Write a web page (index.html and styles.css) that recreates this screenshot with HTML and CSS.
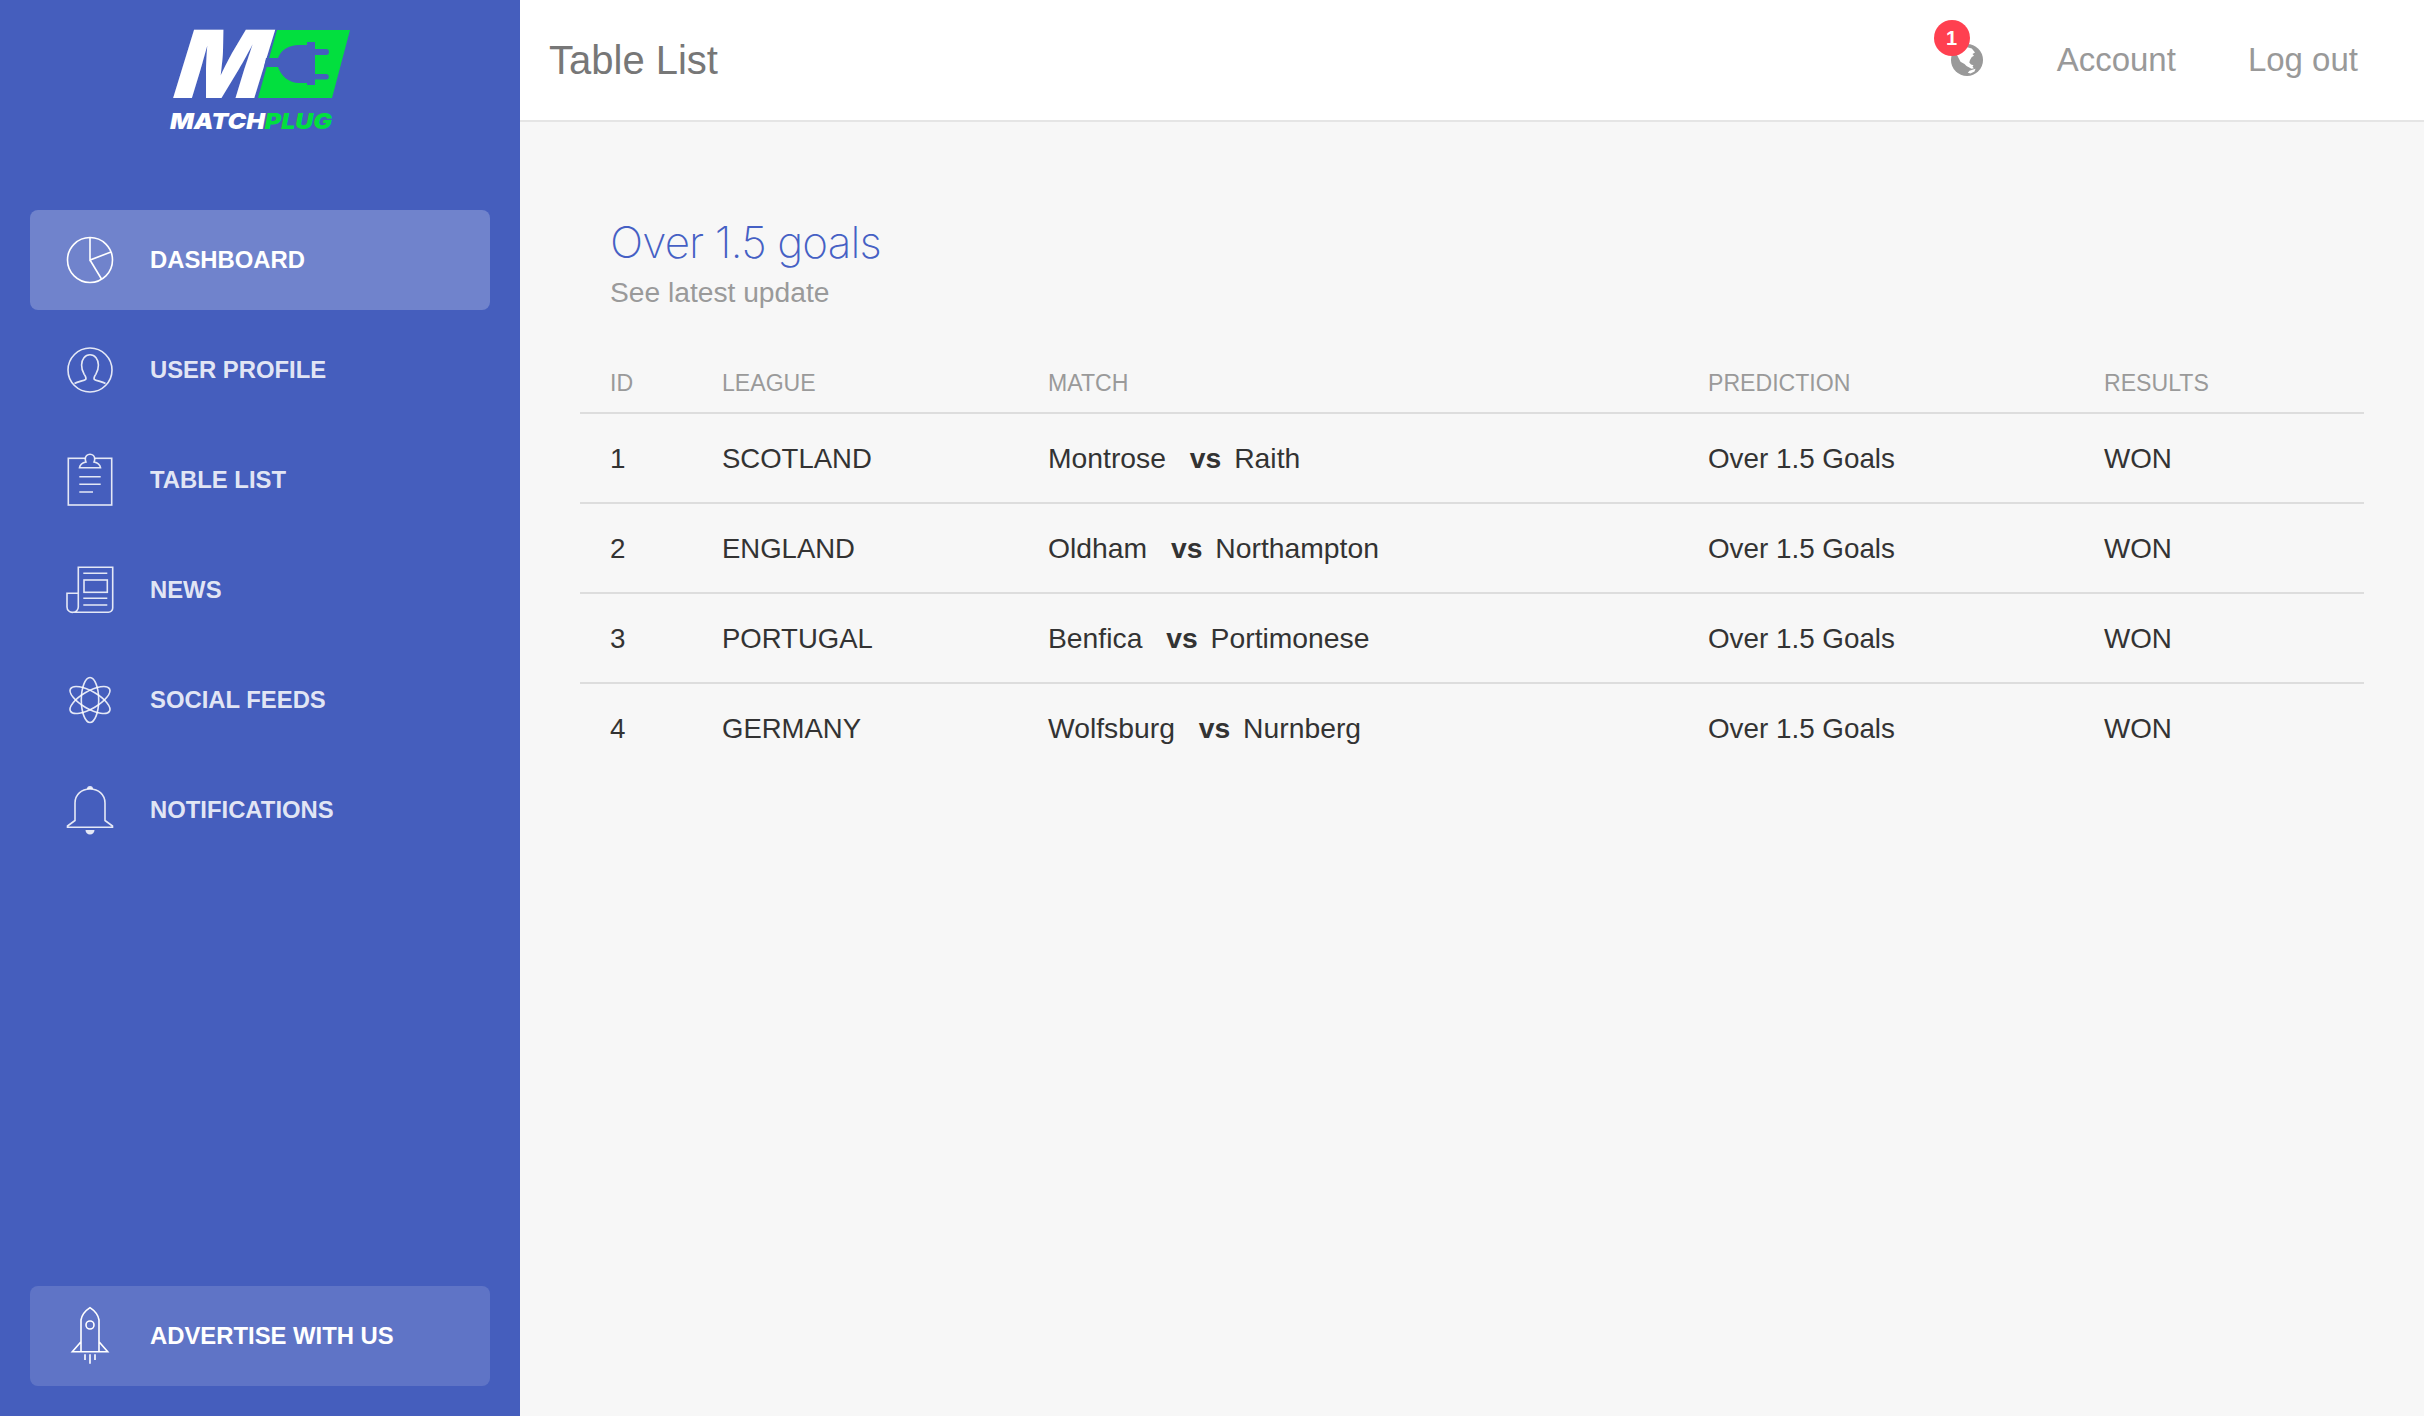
FILE: index.html
```html
<!DOCTYPE html>
<html lang="en">
<head>
<meta charset="utf-8">
<title>Table List</title>
<link rel="stylesheet" href="styles.css">
</head>
<body>
<div class="app">
  <aside class="sidebar">
    <div class="brand">
      <svg class="logo" width="200" height="140" viewBox="160 0 200 140">
        <text class="logo-m" transform="translate(173 98) skewX(-8)" textLength="90" lengthAdjust="spacingAndGlyphs">M</text>
        <path class="logo-green" d="M277 30H350L332 98H258Z"/>
        <path class="logo-cut" d="M307 42h8v7h11a3 3 0 0 1 0 6h-11v19h11a2.600 2.600 0 0 1 0 5.500h-11V85h-8v-2h-8c-10 0-18-7-21-16h-14l2-9h12c3-8 11-13 21-13h8Z"/>
        <text class="logo-word" x="170" y="129" textLength="162" lengthAdjust="spacingAndGlyphs"><tspan class="logo-match">MATCH</tspan><tspan class="logo-plug">PLUG</tspan></text>
      </svg>
    </div>
    <nav class="nav">
      <a class="nav-item active">
        <svg class="nav-icon" viewBox="-4 -4 56 56"><circle cx="24" cy="24" r="22.500"/><path d="M24 1.500V24L45 16M24 24L35.500 43"/></svg>
        <span>DASHBOARD</span>
      </a>
      <a class="nav-item">
        <svg class="nav-icon" viewBox="-4 -4 56 56"><circle cx="24" cy="24" r="22"/><path d="M8.500 37.500c3.500-2.200 9.500-2.600 11.300-4.200.8-1.500-.5-3.200-1.600-5-1.600-2.800-2.700-6-2.600-9.300C15.700 13 19 8.800 24 8.800s8.300 4.200 8.400 10.200c.1 3.300-1 6.500-2.600 9.300-1.100 1.800-2.400 3.500-1.600 5 1.800 1.600 7.800 2 11.300 4.200"/></svg>
        <span>USER PROFILE</span>
      </a>
      <a class="nav-item">
        <svg class="nav-icon" viewBox="-4 -4 56 56"><rect x="2.300" y="2.300" width="43.400" height="46.700"/><path class="knockout" d="M13.500 11.700c.5-3 3-5 6.500-5.700-.5-1-.7-2-.7-3 0-2.800 2-4.800 4.700-4.800s4.700 2 4.700 4.800c0 1-.2 2-.7 3 3.500.7 6 2.700 6.500 5.700z"/><path d="M13.300 20.700H34.700M13.300 28.300H34.700M13.300 36H27"/></svg>
        <span>TABLE LIST</span>
      </a>
      <a class="nav-item">
        <svg class="nav-icon" viewBox="-4 -4 56 56"><path d="M6.300 46.300H42.400a4.300 4.300 0 0 0 4.300-4.300V1.300H12.300V41a5.300 5.300 0 0 1-5.300 5.300 5.300 5.300 0 0 1-6-5.300V27.300H12.300"/><rect x="18" y="14" width="23.300" height="12.300"/><path d="M17.300 7.300H41.300M17.300 32.300H41.300M17.300 39H41.300"/></svg>
        <span>NEWS</span>
      </a>
      <a class="nav-item">
        <svg class="nav-icon" viewBox="-4 -4 56 56"><ellipse cx="24" cy="24" rx="8.700" ry="22.500"/><ellipse cx="24" cy="24" rx="8.700" ry="22.500" transform="rotate(60 24 24)"/><ellipse cx="24" cy="24" rx="8.700" ry="22.500" transform="rotate(-60 24 24)"/></svg>
        <span>SOCIAL FEEDS</span>
      </a>
      <a class="nav-item">
        <svg class="nav-icon" viewBox="-4 -4 56 56"><path d="M1.500 41.300V40L9 34.500V17C9 8.500 15.500 3 24 3s15 5.500 15 14V34.500L46.500 40V41.300Z"/><path class="solid" d="M21 3a3 3 0 0 1 6 0zM19.500 44h9a4.500 4.500 0 0 1-9 0z"/></svg>
        <span>NOTIFICATIONS</span>
      </a>
    </nav>
    <a class="nav-item promo">
      <svg class="nav-icon" viewBox="-4 -4 56 56"><path d="M15 39.700V8C16 2 20.500-2 24-4.300 27.500-2 32 2 33 8V39.700M15 29.700L6.300 39.700H41.700L33 29.700"/><circle cx="24" cy="13" r="4"/><path d="M19 42.300V48M24 42.300V51.700M29 42.300V48"/></svg>
      <span>ADVERTISE WITH US</span>
    </a>
  </aside>
  <main class="main">
    <header class="topbar">
      <h1 class="page-title">Table List</h1>
      <div class="top-links">
        <span class="globe">
          <svg class="globe-icon" width="32" height="32" viewBox="0 0 32 32"><circle cx="16" cy="16" r="16"/><path class="land" d="M6 11L11 5 16.300 3.300 20.800 4.500 24 8.500 21.500 10 23 11.800 20.800 13 19 16 18.300 18.500 20 20.500 22.500 21.300 21.500 22.800 23 24.300 20.500 24.700 15.500 22 13.500 20 9.500 17.700ZM16.800 28.800L18.500 26.800 24.500 24.800 23.500 27.500 19.500 29.500Z"/></svg>
          <span class="badge">1</span>
        </span>
        <a class="top-link">Account</a>
        <a class="top-link">Log out</a>
      </div>
    </header>
    <section class="content">
      <h2 class="card-title">Over 1.5 goals</h2>
      <p class="card-sub">See latest update</p>
      <table class="matches">
        <colgroup><col class="c-id"><col class="c-league"><col class="c-match"><col class="c-pred"><col></colgroup>
        <thead>
          <tr><th>ID</th><th>LEAGUE</th><th>MATCH</th><th>PREDICTION</th><th>RESULTS</th></tr>
        </thead>
        <tbody>
          <tr><td>1</td><td class="league">SCOTLAND</td><td class="match">Montrose <b>vs</b> Raith</td><td>Over 1.5 Goals</td><td>WON</td></tr>
          <tr><td>2</td><td class="league">ENGLAND</td><td class="match">Oldham <b>vs</b> Northampton</td><td>Over 1.5 Goals</td><td>WON</td></tr>
          <tr><td>3</td><td class="league">PORTUGAL</td><td class="match">Benfica <b>vs</b> Portimonese</td><td>Over 1.5 Goals</td><td>WON</td></tr>
          <tr><td>4</td><td class="league">GERMANY</td><td class="match">Wolfsburg <b>vs</b> Nurnberg</td><td>Over 1.5 Goals</td><td>WON</td></tr>
        </tbody>
      </table>
    </section>
  </main>
</div>
</body>
</html>
```
FILE: styles.css
```css
* { box-sizing: border-box; }
html, body { margin: 0; height: 100%; }
body { font-family: "Liberation Sans", Arial, sans-serif; background: #f7f7f7; color: #333; }
.app { display: flex; height: 1416px; }

.sidebar { width: 520px; flex: none; background: #455ebd; display: flex; flex-direction: column; padding: 0 30px 30px; }
.brand { height: 210px; margin: 0 -30px; display: flex; justify-content: center; align-items: flex-start; }
.logo { display: block; margin-left: 0; }
.logo-m { font-family: Inter, "Liberation Sans", sans-serif; font-weight: 900; font-style: italic; font-size: 94px; fill: #fff; }
.logo-green { fill: #02df3e; }
.logo-cut { fill: #455ebd; }
.logo-word { font-family: Inter, "Liberation Sans", sans-serif; font-weight: 900; font-style: italic; font-size: 22px; }
.logo-match { fill: #fff; }
.logo-plug { fill: #02df3e; }

.nav { display: flex; flex-direction: column; gap: 10px; }
.nav-item { display: flex; align-items: center; gap: 32px; height: 100px; padding-left: 32px; border-radius: 8px; font-size: 23.850px; font-weight: 700; color: rgba(255,255,255,.86); }
.nav-item.active { background: rgba(255,255,255,.23); color: #fff; }
.nav-item.promo { margin-top: auto; background: rgba(255,255,255,.14); color: #fff; }
.nav-icon { width: 56px; height: 56px; flex: none; overflow: visible; fill: none; stroke: currentColor; stroke-width: 1.6; }
.nav-icon .knockout { fill: #455ebd; }
.nav-icon .solid { fill: currentColor; stroke: none; }

.main { flex: 1; display: flex; flex-direction: column; min-width: 0; }
.topbar { height: 122px; flex: none; background: #fff; border-bottom: 2px solid #e5e5e5; display: flex; align-items: center; justify-content: space-between; padding: 0 66px 0 29px; }
.page-title { margin: 0; font-size: 40px; font-weight: 400; color: #777; }
.top-links { display: flex; align-items: center; gap: 72px; }
.top-link { font-size: 33px; color: #999; }
.globe { position: relative; display: block; width: 32px; height: 32px; margin-right: 2px; }
.globe-icon { display: block; fill: #999; }
.globe-icon .land { fill: #fff; }
.badge { position: absolute; left: -17px; top: -24px; width: 36px; height: 36px; border-radius: 50%; background: #ff4050; color: #fff; font-size: 20px; font-weight: 700; display: flex; align-items: center; justify-content: center; }

.content { padding: 94px 60px 0; }
.card-title { margin: 0; padding-left: 30px; font-family: Inter, "Liberation Sans", sans-serif; font-size: 44px; letter-spacing: -0.900px; line-height: 52px; font-weight: 200; color: #4560c4; }
.card-sub { margin: 6px 0 0; padding-left: 30px; font-size: 28.200px; line-height: 36px; color: #9a9a9a; }
.matches { width: 100%; margin-top: 44px; border-spacing: 0; table-layout: fixed; }
.c-id { width: 112px; }
.c-league { width: 326px; }
.c-match { width: 660px; }
.c-pred { width: 396px; }
.matches th { height: 60px; padding: 1px 0 0 30px; border-bottom: 2px solid #ddd; text-align: left; font-size: 23.100px; font-weight: 400; color: #9a9a9a; }
.matches td { height: 90px; padding: 1px 0 0 30px; border-bottom: 2px solid #ddd; font-size: 27.800px; color: #333; }
.matches td.league { font-size: 27.500px; }
.matches td.match { font-size: 28.300px; }
.matches tbody tr:last-child td { border-bottom: 0; height: 88px; }
.matches b { margin: 0 5px 0 16px; }
```
